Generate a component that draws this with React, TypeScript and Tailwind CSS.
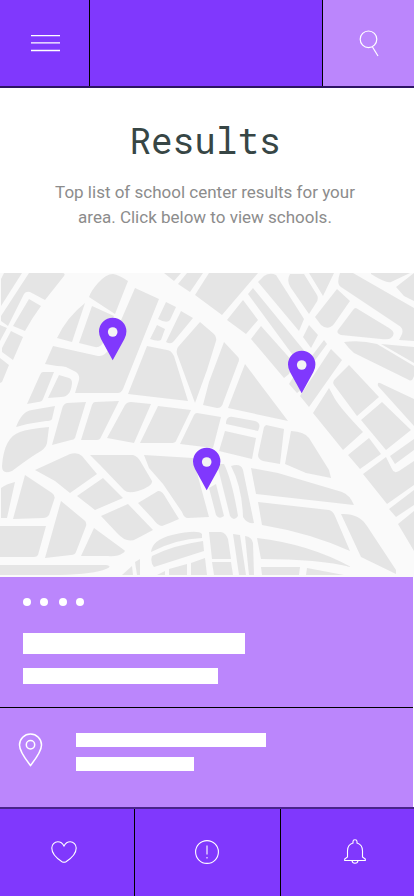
const blocks = [
  "M4 273H22L1 306V279Z",
  "M29 273H62Q66 273 64 276L45 300L30 292Q26 291 24 294L8 326L1 321V316Z",
  "M29 299L41 306Q32 318 25 331L13 326Z",
  "M0 325L7 328L0 341Z",
  "M11 331L23 337L13 360L2 352V348Z",
  "M0 358L9 365L2 382L0 383Z",
  "M89 297Q91 291 98 283Q106 274 113 274Q119 275 128 281L115 314Z",
  "M57 338Q67 317 85 303L72 342Z",
  "M92 306L114 316L104 341Q101 348 95 347L79 343Z",
  "M53 346L98 356Q105 357 109 348L135 288L159 299L123 389Q121 393 118 393H75L79 380Q80 375 76 372L66 367Q62 366 57 366L45 364Z",
  "M43 372H54L43 399Q42 402 38 402L27 404L40 375Q41 372 43 372Z",
  "M59 375L69 378Q72 379 72 383Q71 397 61 397L48 398Z",
  "M16 427Q22 411 32 410L55 406L52 419Q51 421 46 421Q30 423 16 427Z",
  "M49 427L47 443Q46 449 36 454Q28 459 12 471Q2 475 2 466Q4 437 20 432Q28 429 49 427Z",
  "M67 403L86 402L75 438Q74 440 71 440L52 445L62 409Q63 404 67 403Z",
  "M95 402L119 401L101 437Q100 440 97 440H81L92 405Q93 402 95 402Z",
  "M131 402L151 404L134 443L107 438L125 405Q127 402 131 402Z",
  "M147 346L167 350Q171 350 174 356L188 401L128 394Z",
  "M166 302L176 307L170 320Q167 324 158 319Z",
  "M157 325L165 329L161 340Q158 342 150 339Z",
  "M181 311L193 318L174 341Q171 345 166 342Z",
  "M200 322L214 334Q217 337 216 341L207 370L195 403L177 354Q176 350 178 347Z",
  "M224 342L238 357Q240 359 238 363L223 403Q222 408 217 408L203 405L209 382Z",
  "M245 364L288 421L228 408Z",
  "M164 273H181L174 281Z",
  "M187 273H203L190 292L178 284Z",
  "M209 273H258L222 315L195 295Z",
  "M243 300L258 320L246 334L227 320Z",
  "M261 326L294 363L289 374L284 378L251 339Z",
  "M289 384L294 376L301 390L297 393Z",
  "M253 288L311 359L303 369L248 294Z",
  "M258 282L264 276Q270 272 276 275L304 319L299 331Z",
  "M290 274H304L317 295Q319 299 316 303L309 314L291 288Q286 281 290 274Z",
  "M309 273H334L323 296Z",
  "M337 289L350 301L334 324Q328 331 321 325L315 317Z",
  "M309 325L318 335L311 348L303 337Z",
  "M324 340L327 344L313 363L308 361Z",
  "M331 349L342 360L309 407L300 396Z",
  "M356 308L389 328Q397 333 391 338Q389 340 381 339L341 335Q336 333 338 330L353 310Q354 308 356 308Z",
  "M340 273H353L414 308V341L399 340L402 334Q404 328 398 325L341 287Q336 284 340 273Z",
  "M371 273H410L391 282Q387 284 371 274Z",
  "M396 287L414 273V301L404 296Z",
  "M344 342Q361 340 377 344L414 366V376Q412 382 409 380L354 353Q349 349 344 342Z",
  "M381 344L414 347V363Z",
  "M349 365L379 397L357 416L334 385Q332 382 335 379Z",
  "M329 388L335 399Q341 409 363 432L343 450L313 413Z",
  "M382 402L411 430L386 450L361 420Z",
  "M369 438L381 454L360 469L348 455Z",
  "M380 383L414 399V426L378 386Q377 382 380 383Z",
  "M390 456L414 439V450L395 464Z",
  "M363 474L386 457L392 469Q394 474 399 471L414 461V485L387 504Z",
  "M389 509L414 490V505L396 517Z",
  "M398 524L414 511V551Z",
  "M266 425L284 429L280 464L263 461Q258 459 258 455L264 427Z",
  "M291 431Q305 432 309 438L329 470L331 478L306 473L285 464Z",
  "M158 406L191 410L176 441Q175 443 171 443H140Z",
  "M197 413L221 417L213 448L180 444L194 415Q195 413 197 413Z",
  "M226 422Q227 416 233 417L255 421Q262 423 258 431L226 424Z",
  "M225 431L256 438L252 459L219 451Z",
  "M144 455L193 458L209 517L188 518Q184 518 182 512L163 484L149 468Z",
  "M35 470L70 454Q78 452 82 456L97 474L70 493L55 481Z",
  "M90 455H133Q138 456 142 464L152 481Q153 486 138 491Q128 494 124 490L100 465Z",
  "M103 478L123 498L95 510L77 496Z",
  "M128 504L153 530L136 539Q127 544 117 533L101 516Z",
  "M138 503L158 491Q162 490 166 498L179 519Q170 523 162 526Q158 526 153 519Z",
  "M1 488Q6 484 15 482L7 518H1Z",
  "M25 475L52 493Q56 496 54 500L49 515Q47 518 43 518L13 519Z",
  "M61 501L84 520Q87 522 86 526L76 552Q75 555 71 555L45 558Z",
  "M0 526H46L38 555Q37 557 34 557H0Z",
  "M94 528L124 550Q126 551 123 553Q117 557 108 556H81Z",
  "M0 565H106Q113 566 106 569Q94 574 60 575H0Z",
  "M122 575L132 566L133 575Z",
  "M135 562L140 559V575H137Z",
  "M151 552Q152 540 172 535Q198 529 202 534V538Q176 539 151 552Z",
  "M152 556Q174 545 203 541L204 551L154 567Q150 562 152 556Z",
  "M157 575L165 571V575Z",
  "M169 569L187 564V575H169Z",
  "M191 563L205 558L207 575H191Z",
  "M209 532H221Q226 533 228 539L231 559L212 559Z",
  "M212 562H231L233 575H214Z",
  "M233 534L240 535L246 575H239Z",
  "M245 536Q252 537 253 543L254 575H249Z",
  "M209 488L216 484L224 516Q219 520 216 515Z",
  "M217 464L224 464Q232 480 238 516Q234 522 230 516Z",
  "M231 466Q241 463 243 470L254 523Q247 524 243 517Q242 487 231 466Z",
  "M251 468L278 473L342 492Q350 495 354 505L256 494Z",
  "M258 502L329 510Q333 511 335 516L350 551Q310 533 262 525Z",
  "M257 538Q309 544 351 567Q319 559 261 559Z",
  "M261 567H300L299 575H262Z",
  "M307 568L344 575H306Z",
  "M341 514Q359 513 367 526L396 570V574L361 557Z",
];

const pins = ["translate(99 318)", "translate(288 351)", "translate(193 448)"];

function SchoolMap() {
  return (
    <svg
      viewBox="0 273 414 304"
      className="block w-full bg-[#fafafa]"
      role="img"
      aria-label="Map of schools"
    >
      <path d={blocks.join("")} fill="#e5e5e5" />
      {pins.map((place) => (
        <g key={place} transform={place}>
          <path d="M13.7 42.3L2 21Q0 17.5 0 13.5A13.7 13.7 0 0 1 27.4 13.5Q27.4 17.5 25.4 21Z" fill="#8038fd" />
          <circle cx="13.7" cy="14" r="4.8" fill="#f4f4f4" />
        </g>
      ))}
    </svg>
  );
}

export default function App() {
  return (
    <div className="min-h-screen w-full bg-white font-['Roboto','Liberation_Sans',sans-serif]">
      <header className="grid h-[88px] grid-cols-[90fr_233fr_91fr] border-b-2 border-[#2d1463] bg-[#8038fd]">
        <button aria-label="Menu" className="flex items-center justify-center border-r border-black pl-px text-white">
          <svg width="29" height="18" viewBox="0 0 29 18" stroke="currentColor" strokeWidth="1.3">
            <path d="M0 1.6H29M0 8.9H29M0 16.5H29" />
          </svg>
        </button>
        <div className="border-r border-black" />
        <button aria-label="Search" className="flex items-center justify-center bg-[#bb86fc] text-white">
          <svg width="20" height="27" viewBox="0 0 20 27" fill="none" stroke="currentColor" strokeWidth="1.2">
            <circle cx="9.5" cy="9.3" r="8.3" />
            <path d="M13.5 17L19 26" />
          </svg>
        </button>
      </header>

      <main>
        <section className="pt-7 pr-9 pb-[43px] pl-8 text-center">
          <h1 className="font-['Roboto_Mono','Liberation_Mono',monospace] text-[36px] leading-12 text-[#374645]">
            Results
          </h1>
          <p className="mx-auto mt-4 max-w-[320px] text-[17px] leading-[25px] text-[#8c8c8c]">
            Top list of school center results for your <br />
            area. Click below to view schools.
          </p>
        </section>

        <SchoolMap />

        <section className="mr-px bg-[#bb86fc]">
          <div className="h-[131px] border-b border-black px-[23px] pt-[21px]">
            <div className="flex gap-[9px]">
              <span className="size-2 rounded-full bg-white" />
              <span className="size-2 rounded-full bg-white" />
              <span className="ml-[2px] size-2 rounded-full bg-white" />
              <span className="size-2 rounded-full bg-white" />
            </div>
            <div className="mt-[27px] h-[21px] w-[222px] bg-white" />
            <div className="mt-[14px] h-4 w-[195px] bg-white" />
          </div>
          <div className="flex h-[99px] gap-[33px] pt-[25px] pl-[18px]">
            <svg width="25" height="34" viewBox="0 0 25 34" fill="none" stroke="white" strokeWidth="1.5">
              <path d="M12.5 32.5C9.5 28.5 1.5 19 1.5 12A11 11 0 0 1 23.5 12C23.5 19 15.5 28.5 12.5 32.5Z" />
              <circle cx="12.5" cy="11.8" r="4.2" />
            </svg>
            <div>
              <div className="h-[14px] w-[190px] bg-white" />
              <div className="mt-[10px] h-[14px] w-[118px] bg-white" />
            </div>
          </div>
        </section>
      </main>

      <nav className="grid h-[89px] grid-cols-[135fr_146fr_133fr] border-t-2 border-[#49248b] bg-[#8038fd] text-white">
        <button aria-label="Favourites" className="flex items-center justify-center border-r border-black pb-[2px]">
          <svg width="26" height="22" viewBox="0 0 26 22" fill="none" stroke="currentColor" strokeWidth="1.1" className="mr-[6px]">
            <path d="M13 5C11.5 2.2 9.5 .8 6.8 .8C3.5 .8 .8 3.5 .8 7C.8 12.5 6 17.5 11 20.7Q13 21.8 15 20.7C20 17.5 25.2 12.5 25.2 7C25.2 3.5 22.5 .8 19.2 .8C16.5 .8 14.5 2.2 13 5Z" />
          </svg>
        </button>
        <button aria-label="Alerts" className="flex items-center justify-center border-r border-black pr-px pb-[2px]">
          <svg width="24" height="24" viewBox="0 0 24 24" fill="none" stroke="currentColor" strokeWidth="1.1">
            <circle cx="12" cy="12" r="11.4" />
            <path d="M12 5.5V14.5M12 17V18.5" />
          </svg>
        </button>
        <button aria-label="Notifications" className="flex items-center justify-center pb-[2px]">
          <svg width="22" height="25" viewBox="0 0 22 25" fill="none" stroke="currentColor" strokeWidth="1.1" className="ml-[14px]">
            <path d="M9 4V2.5Q9 .7 11 .7T13 2.5V4Q18.5 5.5 18.5 12V18L21.3 20V21.5H.7V20L3.5 18V12Q3.5 5.5 9 4ZM8 21.5Q8.3 24.3 11 24.3T14 21.5" />
          </svg>
        </button>
      </nav>
    </div>
  );
}
